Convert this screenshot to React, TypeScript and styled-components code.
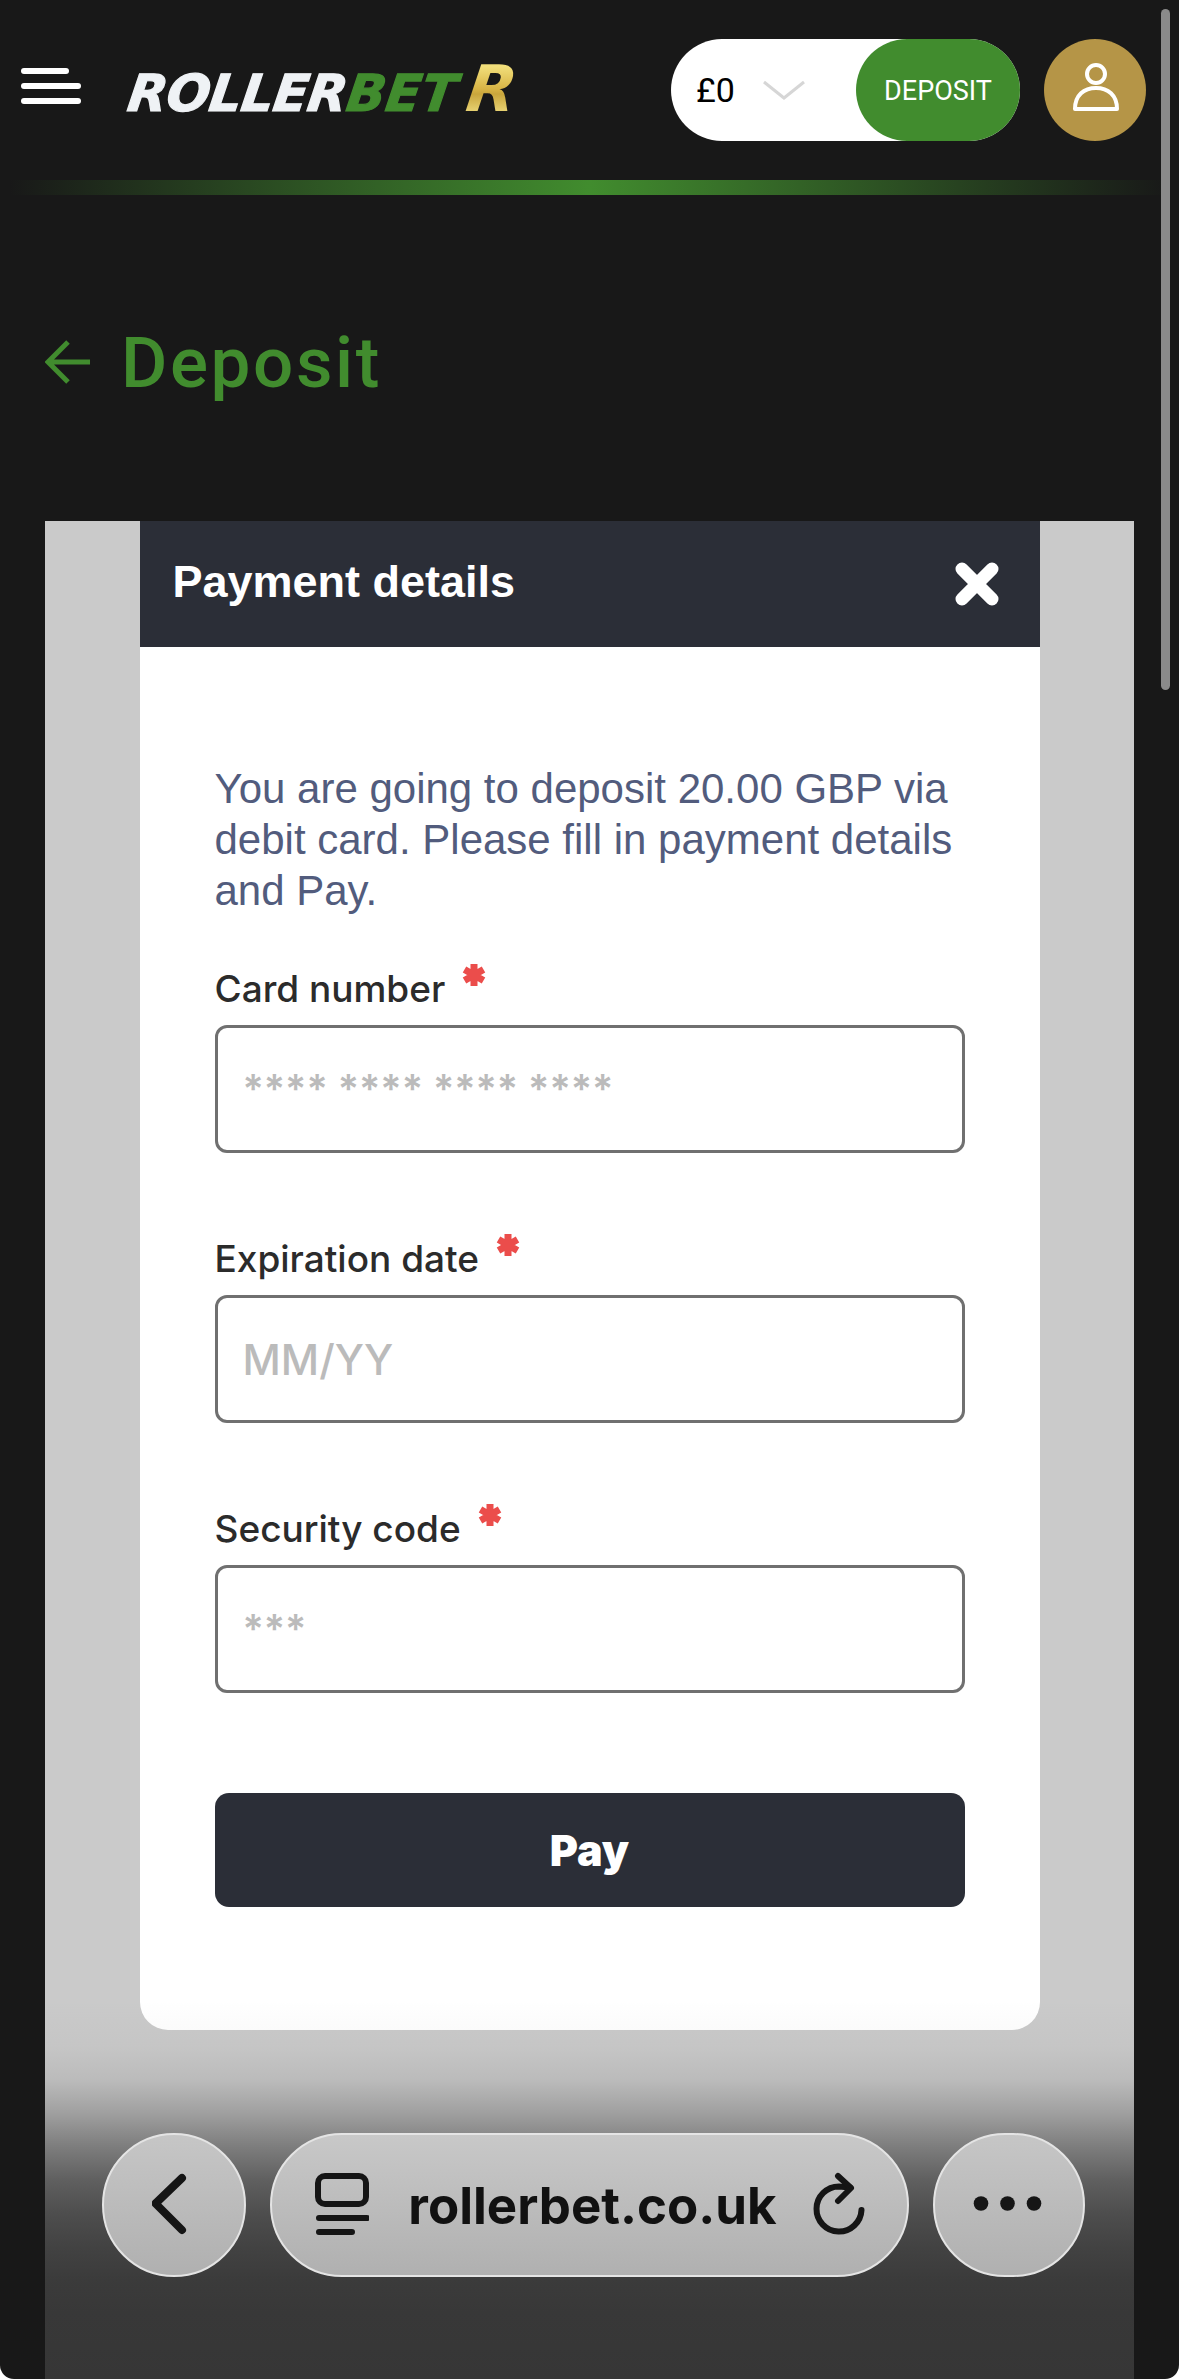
import React from "react";
import styled, { createGlobalStyle } from "styled-components";

const GlobalStyle = createGlobalStyle`
  html, body {
    margin: 0;
    padding: 0;
    background: #fff;
  }
  * {
    box-sizing: border-box;
  }
`;

const fields = [
  { label: "Card number", placeholder: "**** **** **** ****", masked: true },
  { label: "Expiration date", placeholder: "MM/YY", masked: false },
  { label: "Security code", placeholder: "***", masked: true },
];

const App = () => {
  return (
    <Page>
      <GlobalStyle />
      <Scrollbar />
      <Header>
        <Burger>
          <BurgerBar $short />
          <BurgerBar />
          <BurgerBar />
        </Burger>
        <Logo>
          <LogoWhite>ROLLER</LogoWhite>
          <LogoGreen>BET</LogoGreen>
          <LogoGold>R</LogoGold>
        </Logo>
        <HeaderRight>
          <Balance>
            <Amount>£0</Amount>
            <svg width="44" height="20" viewBox="0 0 44 20" fill="none">
              <path d="M2 2 L22 18 L42 2" stroke="#d6d6d6" strokeWidth="3" />
            </svg>
            <DepositButton>DEPOSIT</DepositButton>
          </Balance>
          <Avatar>
            <svg width="48" height="60" viewBox="0 0 48 60" fill="none">
              <circle cx="25" cy="14" r="9" stroke="#fff" strokeWidth="4" />
              <path d="M4 49 C4 35 13 28 25 28 C37 28 46 35 46 49 Z" stroke="#fff" strokeWidth="4" strokeLinejoin="round" />
            </svg>
          </Avatar>
        </HeaderRight>
      </Header>
      <GreenLine />
      <TitleRow>
        <BackArrow width="46" height="44" viewBox="0 0 46 44" fill="none">
          <path d="M45 22 H3 M23 2 L3 22 L23 42" stroke="#418c2e" strokeWidth="5" />
        </BackArrow>
        <Title>Deposit</Title>
      </TitleRow>
      <Panel>
        <Modal>
          <ModalHeader>
            <ModalTitle>Payment details</ModalTitle>
            <svg width="44" height="44" viewBox="0 0 44 44" fill="none">
              <path d="M7 7 L37 37 M37 7 L7 37" stroke="#fff" strokeWidth="13" strokeLinecap="round" />
            </svg>
          </ModalHeader>
          <ModalBody>
            <Intro>You are going to deposit 20.00 GBP via debit card. Please fill in payment details and Pay.</Intro>
            <Fields>
              {fields.map((f) => (
                <Field key={f.label}>
                  <Label>
                    {f.label}
                    <RequiredMark width="24" height="24" viewBox="0 0 24 24">
                      <path d="M12 1 V23 M2.5 6.5 L21.5 17.5 M21.5 6.5 L2.5 17.5" stroke="#eb4d4b" strokeWidth="7" />
                    </RequiredMark>
                  </Label>
                  <Input placeholder={f.placeholder} $masked={f.masked} />
                </Field>
              ))}
            </Fields>
            <PayButton>Pay</PayButton>
          </ModalBody>
        </Modal>
        <Fade />
      </Panel>
      <BrowserBar>
        <RoundButton>
          <svg width="44" height="70" viewBox="0 0 44 70" fill="none">
            <path d="M30 8 L3.5 33.5 L30 60" stroke="#151515" strokeWidth="8" strokeLinecap="round" strokeLinejoin="round" />
          </svg>
        </RoundButton>
        <UrlPill>
          <svg width="54" height="64" viewBox="0 0 54 64" fill="none">
            <rect x="3" y="3" width="48" height="28" rx="7" stroke="#151515" strokeWidth="6" />
            <path d="M4 45 H52 M4 59 H37" stroke="#151515" strokeWidth="6" strokeLinecap="round" />
          </svg>
          <Url>rollerbet.co.uk</Url>
          <svg width="56" height="66" viewBox="0 0 56 66" fill="none">
            <path d="M49.5 38 A22.5 22.5 0 1 1 27 14.5 L38 15.5" stroke="#151515" strokeWidth="6" strokeLinecap="round" />
            <path d="M26 4 L39 16 L26 29" stroke="#151515" strokeWidth="6" strokeLinecap="round" strokeLinejoin="round" />
          </svg>
        </UrlPill>
        <RoundButton $wide>
          <svg width="72" height="18" viewBox="0 0 72 18">
            <circle cx="8" cy="7.5" r="7.3" fill="#151515" />
            <circle cx="34.5" cy="7.5" r="7.3" fill="#151515" />
            <circle cx="61" cy="7.5" r="7.3" fill="#151515" />
          </svg>
        </RoundButton>
      </BrowserBar>
    </Page>
  );
};

export default App;

const Page = styled.div`
  position: relative;
  width: 1179px;
  height: 2379px;
  overflow: hidden;
  border-radius: 0 0 14px 14px;
  background: #181818;
  display: flex;
  flex-direction: column;
`;

const Scrollbar = styled.div`
  position: absolute;
  top: 9px;
  left: 1161px;
  width: 9px;
  height: 681px;
  border-radius: 5px;
  background: #8a8a8a;
  z-index: 5;
`;

const Header = styled.header`
  display: flex;
  align-items: center;
  height: 102px;
  margin-top: 39px;
  padding: 0 33px 0 21px;
`;

const Burger = styled.div`
  display: flex;
  flex-direction: column;
  gap: 9px;
  width: 60px;
  margin-right: 48px;
  margin-top: -8px;
`;

const BurgerBar = styled.div<{ $short?: boolean }>`
  height: 6px;
  width: ${(p) => (p.$short ? "48px" : "60px")};
  border-radius: 3px;
  background: #fff;
`;

const Logo = styled.div`
  display: flex;
  align-items: baseline;
  font-family: "DejaVu Sans", "Liberation Sans", sans-serif;
  font-style: italic;
  font-weight: 700;
  line-height: 1;
  margin-top: -3px;
  transform: skewX(-8deg);
`;

const LogoWhite = styled.span`
  font-size: 51px;
  letter-spacing: -0.5px;
  color: #eff2f5;
  -webkit-text-stroke: 1.2px #eff2f5;
`;

const LogoGreen = styled.span`
  font-size: 51px;
  letter-spacing: 0.4px;
  color: #418c2e;
  -webkit-text-stroke: 1.2px #418c2e;
`;

const LogoGold = styled.span`
  font-size: 64px;
  margin-left: 10px;
  padding-right: 6px;
  background: linear-gradient(180deg, #f1de7a 15%, #d8b445 50%, #c9a63c 58%, #e8d272 85%);
  -webkit-background-clip: text;
  background-clip: text;
  color: transparent;
`;

const HeaderRight = styled.div`
  display: flex;
  gap: 24px;
  margin-left: auto;
`;

const Balance = styled.div`
  display: flex;
  align-items: center;
  width: 349px;
  height: 102px;
  padding-left: 25px;
  border-radius: 51px;
  background: #fff;
`;

const Amount = styled.span`
  font-family: "Roboto", sans-serif;
  font-size: 34px;
  font-weight: 400;
  color: #000;
  margin-right: 27px;
`;

const DepositButton = styled.button`
  width: 164px;
  height: 102px;
  margin-left: auto;
  border: 0;
  padding: 2px 0 0 0;
  border-radius: 51px;
  background: #418c2e;
  color: #fff;
  font-family: "Roboto", sans-serif;
  font-size: 27px;
`;

const Avatar = styled.div`
  display: flex;
  align-items: center;
  justify-content: center;
  width: 102px;
  height: 102px;
  border-radius: 50%;
  background: #b59547;
`;

const GreenLine = styled.div`
  height: 15px;
  margin: 39px 9px 0 9px;
  background: linear-gradient(90deg, rgba(65, 140, 46, 0) 0%, #418c2e 50%, rgba(65, 140, 46, 0) 100%);
`;

const TitleRow = styled.div`
  display: flex;
  align-items: center;
  gap: 30px;
  height: 100px;
  margin-top: 120px;
  padding-left: 45px;
`;

const BackArrow = styled.svg`
  margin-bottom: 7px;
`;

const Title = styled.h1`
  margin: 0;
  padding-bottom: 6px;
  font-family: "Roboto", sans-serif;
  font-size: 71px;
  font-weight: 500;
  letter-spacing: 2.6px;
  color: #418c2e;
`;

const Panel = styled.main`
  position: relative;
  flex: 1;
  display: flex;
  justify-content: center;
  align-items: flex-start;
  margin: 106px 45px 0 45px;
  background: #cacaca;
`;

const Fade = styled.div`
  position: absolute;
  left: 0;
  right: 0;
  bottom: 0;
  height: 379px;
  background: linear-gradient(
    180deg,
    rgba(56, 56, 56, 0) 0,
    rgba(56, 56, 56, 0.03) 47px,
    rgba(56, 56, 56, 0.1) 80px,
    rgba(56, 56, 56, 0.29) 113px,
    rgba(56, 56, 56, 0.41) 130px,
    rgba(56, 56, 56, 0.53) 147px,
    rgba(56, 56, 56, 0.73) 180px,
    rgba(56, 56, 56, 0.85) 213px,
    rgba(56, 56, 56, 0.93) 247px,
    rgba(56, 56, 56, 0.98) 280px,
    #383838 313px,
    #363636 100%
  );
`;

const Modal = styled.section`
  width: 900px;
  border-radius: 0 0 28px 28px;
  background: #fff;
  overflow: hidden;
`;

const ModalHeader = styled.div`
  display: flex;
  align-items: center;
  justify-content: space-between;
  height: 126px;
  padding: 0 41px 0 33px;
  background: #2b2e37;
`;

const ModalTitle = styled.h2`
  margin: 0;
  padding-bottom: 5px;
  font-family: "Liberation Sans", Arial, sans-serif;
  font-size: 45px;
  font-weight: 700;
  color: #fff;
`;

const ModalBody = styled.div`
  padding: 116px 75px 123px 75px;
`;

const Intro = styled.p`
  margin: 0 0 53px 0;
  font-family: "Liberation Sans", Arial, sans-serif;
  font-size: 42px;
  line-height: 51px;
  color: #525c7d;
`;

const Fields = styled.div`
  display: flex;
  flex-direction: column;
  gap: 86px;
  margin-bottom: 100px;
`;

const Field = styled.div`
  display: flex;
  flex-direction: column;
  gap: 12px;
`;

const Label = styled.label`
  display: flex;
  align-items: flex-start;
  height: 44px;
  font-family: "Inter", sans-serif;
  font-size: 37px;
  font-weight: 500;
  line-height: 39px;
  color: #2b2b2b;
`;

const RequiredMark = styled.svg`
  margin-left: 17px;
  margin-top: -6px;
`;

const Input = styled.input<{ $masked?: boolean }>`
  width: 100%;
  height: 128px;
  padding: 0 25px;
  border: 3px solid #707070;
  border-radius: 12px;
  background: #fff;
  font-family: "Inter", sans-serif;
  font-size: ${(p) => (p.$masked ? "39.5px" : "42px")};
  font-weight: ${(p) => (p.$masked ? 600 : 500)};
  outline: none;

  &::placeholder {
    color: #bbbbbb;
    opacity: 1;
  }
`;

const PayButton = styled.button`
  display: block;
  width: 100%;
  height: 114px;
  border: 0;
  border-radius: 14px;
  background: #2b2e37;
  color: #fff;
  font-family: "Inter", sans-serif;
  font-size: 43px;
  font-weight: 900;
`;

const BrowserBar = styled.nav`
  position: absolute;
  top: 2133px;
  left: 102px;
  display: flex;
  gap: 24px;
  z-index: 4;
`;

const RoundButton = styled.div<{ $wide?: boolean }>`
  display: flex;
  align-items: center;
  justify-content: center;
  width: ${(p) => (p.$wide ? "152px" : "144px")};
  height: 144px;
  border: 2px solid #e4e4e4;
  border-radius: 72px;
  background: linear-gradient(180deg, #c6c6c6 0%, #b0b0b0 100%);
`;

const UrlPill = styled.div`
  display: flex;
  align-items: center;
  width: 639px;
  height: 144px;
  padding: 0 39px 0 43px;
  border: 2px solid #e4e4e4;
  border-radius: 72px;
  background: linear-gradient(180deg, #c8c8c8 0%, #b0b0b0 100%);
`;

const Url = styled.span`
  flex: 1;
  padding-left: 4px;
  text-align: center;
  font-family: "Inter", "Liberation Sans", sans-serif;
  font-size: 51px;
  font-weight: 700;
  color: #111;
`;
